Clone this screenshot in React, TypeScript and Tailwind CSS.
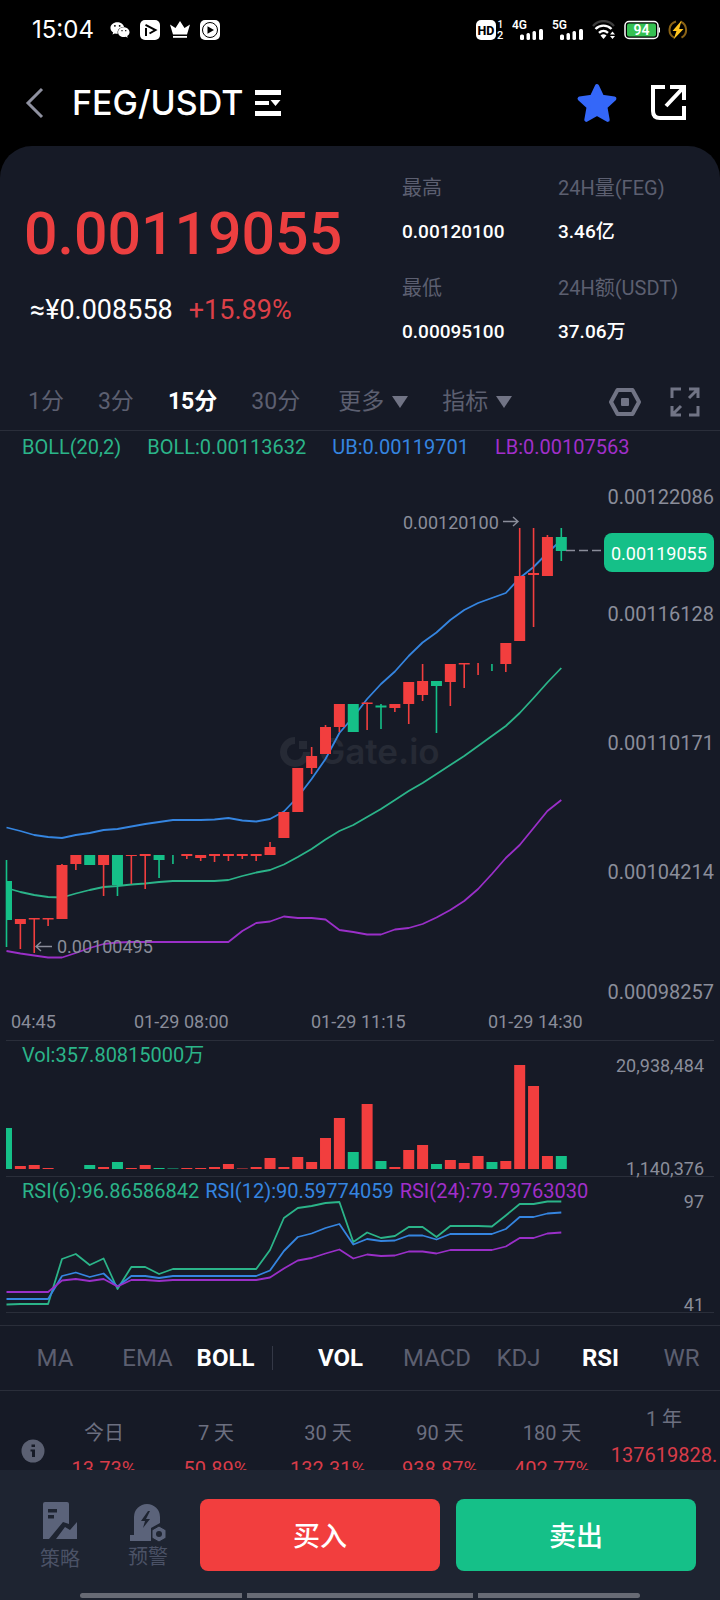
import React from "react";
import { FaWeixin } from "react-icons/fa";

const RED = "#f23e3e";
const GREEN = "#15c088";
const LINE_GREEN = "#2bb489";
const LINE_BLUE = "#3585e0";
const LINE_PURPLE = "#9a2fc8";
const AXIS = "#8a8d9a";
const RULE = "#2a2e3a";

interface Candle {
    up: boolean;
    // open/close body and high/low wick, as chart y values
    body: [number, number] | null;
    wick: [number, number];
    vol: number;
}

const r = (top: number, bottom: number, high: number, low: number, vol: number): Candle => ({
    up: true,
    body: [top, bottom],
    wick: [high, low],
    vol,
});
const g = (top: number, bottom: number, high: number, low: number, vol: number): Candle => ({
    up: false,
    body: [top, bottom],
    wick: [high, low],
    vol,
});

const candles: Candle[] = [
    g(881, 920, 860, 947, 41),
    r(919, 924, 919, 949, 3),
    r(918, 919.5, 918, 953, 4),
    r(918, 919.5, 918, 926, 1),
    r(865, 919, 864, 919, 0),
    r(855, 864, 855, 870, 0),
    g(855, 865, 855, 865, 4),
    r(855, 865, 855, 896, 2),
    g(855, 885, 855, 896, 7),
    r(855, 856, 855, 884, 1),
    r(854, 856, 854, 889, 4),
    g(855, 860, 855, 878, 1),
    { up: false, body: null, wick: [855, 864], vol: 0.5 },
    r(854, 856, 854, 859, 1),
    r(855, 858, 855, 861, 1),
    r(854, 856, 854, 862, 2),
    r(854, 856, 854, 861, 5),
    r(854, 856, 854, 859, 0.5),
    r(854, 856, 854, 861, 2),
    r(847, 855, 842, 855, 11),
    r(812, 838, 812, 838, 2),
    r(768, 812, 768, 812, 12),
    r(756, 768, 747, 774, 7),
    r(727, 754, 725, 754, 31),
    r(704, 727, 704, 732, 51),
    g(704, 732, 704, 732, 17),
    r(702.5, 704, 702.5, 730, 65),
    g(705.5, 707.5, 704, 729, 8),
    r(704, 708, 704, 712, 2),
    r(682, 704, 682, 724, 19),
    r(681, 695, 664, 701, 24),
    g(681, 686, 681, 733, 5),
    r(664, 682, 664, 706, 9),
    r(663, 664.5, 663, 688, 6),
    { up: true, body: null, wick: [663, 675], vol: 13 },
    { up: false, body: null, wick: [664, 671], vol: 7 },
    r(643, 664, 643, 672, 8),
    r(576, 641, 528, 641, 104),
    r(573, 575, 528, 627, 83),
    r(537, 576, 535, 576, 13),
    g(537, 551, 528, 561, 13),
];

const upper = [
    827.5, 831, 835, 837, 838, 835, 833, 830, 829, 826.5, 824, 822, 820, 820, 820, 819.5, 818, 820.5, 821.5, 819,
    811.5, 797, 779, 759, 733, 717, 699, 684, 671.5, 656, 642.5, 632.5, 620, 610, 603, 598, 593, 578, 567, 553, 540,
];
const middle = [
    888, 892, 895, 897, 897.5, 893.5, 890, 887, 886, 884.5, 883.5, 882, 881, 881, 881, 881, 880, 876, 872.5, 870,
    864.5, 857, 849, 839.5, 831, 825, 817, 809, 800, 791, 783, 774, 765, 756, 746, 736, 726, 713, 698, 682.5, 668,
];
const lower = [
    951, 953.5, 955.5, 957.5, 957.5, 953, 948, 944, 942.5, 942, 942, 942, 942, 942, 942, 942, 942, 931, 923, 921.5,
    916.5, 918, 918, 919.5, 930, 932, 934.5, 934.5, 929.5, 928, 924, 917.5, 910, 901, 889, 874, 858, 845, 828, 811, 800,
];

const rsi6 = [
    1304.5, 1304, 1304, 1304, 1259, 1254, 1265, 1258.5, 1289, 1267, 1267, 1274, 1269, 1269, 1269, 1269, 1269, 1269,
    1269, 1250, 1218, 1208, 1206, 1203, 1202, 1242, 1232.5, 1238, 1236, 1227, 1227, 1237, 1226, 1226, 1226, 1226.5,
    1215.5, 1204, 1204, 1201.5, 1201.5,
];
const rsi12 = [
    1299, 1299, 1299, 1299, 1276, 1272.5, 1277, 1273.5, 1286.5, 1276, 1276, 1278, 1276, 1276, 1276, 1276, 1276, 1276,
    1276, 1270.5, 1251, 1237, 1233.5, 1228, 1224, 1244.5, 1239, 1241, 1240.5, 1235.5, 1235.5, 1239.5, 1234, 1234,
    1234, 1234, 1229, 1217, 1217, 1213.5, 1212.5,
];
const rsi24 = [
    1292, 1292, 1292, 1292, 1280.5, 1279, 1281, 1279, 1286.5, 1280, 1280, 1281, 1280, 1280, 1280, 1280, 1280, 1280,
    1280, 1277.5, 1268.5, 1260.5, 1258, 1253.5, 1249.5, 1258.5, 1254.5, 1256, 1255.5, 1251.5, 1251.5, 1253.5, 1250,
    1250, 1250, 1250, 1246.5, 1238, 1238, 1233.5, 1232.5,
];

const cx = (i: number) => 6.5 + i * 13.87;
const toPoints = (ys: number[]) => ys.map((y, i) => `${cx(i).toFixed(1)},${y}`).join(" ");

// the first candle is cut in half by the left edge of the plot
const barBox = (i: number) => (i === 0 ? { x: 6, width: 6 } : { x: cx(i) - 5.5, width: 11 });

const Curve = ({ ys, color }: { ys: number[]; color: string }) => (
    <polyline points={toPoints(ys)} fill="none" stroke={color} strokeWidth="1.8" strokeLinejoin="round" />
);

const SignalBars = ({ label }: { label: string }) => (
    <svg viewBox="0 0 32 22" className="h-[22px] w-8" fill="#fff">
        <text x="0" y="10" fontSize="12" fontWeight="600">{label}</text>
        <rect x="8" y="15.500" width="4" height="5.500" rx="1.500" />
        <rect x="14.500" y="14" width="3.500" height="7" rx="1.500" />
        <rect x="20.500" y="12" width="3.500" height="9" rx="1.500" />
        <rect x="27" y="10" width="4" height="11" rx="1.500" />
    </svg>
);

const StatusBar = () => (
    <div className="flex h-[60px] items-center pl-8 pr-8 text-white">
        <span className="font-['Inter',sans-serif] text-2xl">15:04</span>
        <div className="ml-4 flex items-center gap-[10px]">
            <FaWeixin size={20} />
            <svg viewBox="0 0 20 20" className="size-5">
                <rect width="20" height="20" rx="5" fill="#fff" />
                <path d="M6 8v8M5.500 4.800 15.500 10 9.500 13.500" fill="none" stroke="#000" strokeWidth="2" />
            </svg>
            <svg viewBox="0 0 20 20" className="size-5" fill="#fff">
                <path d="M0 4.500 5.500 8 10 1l4.500 7L20 4.500 17 14.500H3z" />
                <path d="M3 16h14v1.800H3z" />
            </svg>
            <svg viewBox="0 0 20 20" className="size-5">
                <rect width="20" height="20" rx="5" fill="#fff" />
                <circle cx="10" cy="10" r="7.500" fill="none" stroke="#000" strokeWidth="1" />
                <path d="M7.500 6.300 14 10l-6.500 3.700z" fill="#000" />
            </svg>
        </div>
        <div className="ml-auto flex items-center gap-2">
            <svg viewBox="0 0 28 22" className="h-[22px] w-7 overflow-visible">
                <rect y="1" width="20" height="20" rx="5" fill="#fff" />
                <text x="10" y="15.500" fontSize="12.500" fontWeight="800" textAnchor="middle" fill="#000">HD</text>
                <text x="21.500" y="9" fontSize="10" fontWeight="500" fill="#fff">1</text>
                <text x="21" y="20" fontSize="11" fontWeight="500" fill="#fff">2</text>
            </svg>
            <SignalBars label="4G" />
            <SignalBars label="5G" />
            <svg viewBox="0 0 24 20" className="h-5 w-6" fill="none" strokeWidth="2.400">
                <path d="M1 6C7-.5 16-.5 22 6" stroke="#3c3c3c" />
                <path d="M3.500 9c4.500-4.500 11.500-4.500 16 0" stroke="#fff" />
                <path d="M7 12.800c2.700-2.600 6.300-2.600 9 0" stroke="#fff" />
                <path d="M8.500 15.500q3-2.500 6 0l-3 3.500z" fill="#fff" />
                <path d="m18 14.500 2.500-3 2.500 3zM18 16l2.500 3 2.500-3z" fill="#fff" />
            </svg>
            <svg viewBox="0 0 36 20" className="h-5 w-9">
                <rect x="1" y="1.500" width="33" height="17" rx="4" fill="#000" stroke="#fff" strokeWidth="1.500" />
                <rect x="3" y="3.500" width="29" height="13" rx="2" fill="#35c052" />
                <path d="M35.500 7.500v5" stroke="#fff" strokeWidth="1.200" />
                <text x="17.500" y="15" fontSize="14" fontWeight="600" textAnchor="middle" fill="#fff">94</text>
            </svg>
            <svg viewBox="0 0 20 20" className="size-5">
                <path d="M8 1.500a8.700 8.700 0 0 0-2 16M12.500 1.800a8.700 8.700 0 0 1 1 15.800" fill="none" stroke="#8a6215" strokeWidth="2" />
                <path d="M13.500.5 4.500 11h4l-3 8.500L15.500 9h-4.300z" fill="#ffc51f" />
            </svg>
        </div>
    </div>
);

const Header = () => (
    <header className="flex h-[86px] items-center pl-6 pr-8">
        <button aria-label="返回">
            <svg viewBox="0 0 20 32" className="h-8 w-5">
                <path d="M18 2 4 16l14 14" fill="none" stroke="#8f91a0" strokeWidth="3" />
            </svg>
        </button>
        <h1 className="ml-7 font-['Inter',sans-serif] text-[34px] font-medium leading-10 text-white">FEG/USDT</h1>
        <button aria-label="切换交易对" className="ml-3">
            <svg viewBox="0 0 26 28" className="h-7 w-[26px]" fill="#fff">
                <path d="M0 1h26v5H0zM0 12h14v4H0zM0 22h26v5H0zM15.500 11h10L20.500 17z" />
            </svg>
        </button>
        <button aria-label="收藏" className="ml-auto">
            <svg viewBox="0 0 40 38" className="h-10 w-[42px]">
                <path
                    d="m20 3 4.800 10.200 11.700 1.600-8.600 8 2.200 12.200L20 29.200 9.900 35l2.200-12.200-8.600-8 11.700-1.600z"
                    fill="#3467f9"
                    stroke="#3467f9"
                    strokeWidth="4"
                    strokeLinejoin="round"
                />
            </svg>
        </button>
        <button aria-label="分享" className="ml-8">
            <svg viewBox="0 0 38 38" className="size-[38px]" fill="none" stroke="#fff" strokeWidth="4">
                <path d="M15 3H3v24q0 7 7 7h24V22" />
                <path d="M20 3h14v13M33 4 16 22" />
            </svg>
        </button>
    </header>
);

const stats = [
    { label: "最高", value: "0.00120100" },
    { label: "24H量(FEG)", value: "3.46亿" },
    { label: "最低", value: "0.00095100" },
    { label: "24H额(USDT)", value: "37.06万" },
];

const Ticker = () => (
    <section className="flex pb-7 pl-6 pt-7">
        <div className="flex-1 pt-7">
            <div className="text-[59px] font-medium leading-[64px] text-[#ec3f40]">0.00119055</div>
            <div className="mt-7 flex gap-4 pl-[6px] text-[27px] leading-8">
                <span className="text-white">≈¥0.008558</span>
                <span className="text-[#dc4048]">+15.89%</span>
            </div>
        </div>
        <dl className="grid w-[318px] grid-cols-[156px_1fr] gap-y-7 leading-7">
            {stats.map((s) => (
                <div key={s.label} className="flex flex-col gap-4">
                    <dt className="text-xl leading-7 text-[#5c5f70]">{s.label}</dt>
                    <dd className="text-[19px] font-medium text-white">{s.value}</dd>
                </div>
            ))}
        </dl>
    </section>
);

const Caret = () => (
    <svg viewBox="0 0 16 12" className="h-3 w-4" fill="#717485">
        <path d="M0 0h16L8 12z" />
    </svg>
);

const intervals = ["1分", "3分", "15分", "30分"];

const IntervalTabs = () => (
    <nav className="flex h-[57px] items-center border-b border-[#2a2e3a] pl-7 pr-5 text-[23px] text-[#5c5f70]">
        <div className="flex items-center gap-[34px]">
            {intervals.map((name) => (
                <button key={name} className={name === "15分" ? "font-bold text-white" : ""}>{name}</button>
            ))}
            <button className="ml-1 flex items-center gap-2">更多<Caret /></button>
            <button className="flex items-center gap-2">指标<Caret /></button>
        </div>
        <div className="ml-auto flex items-center gap-7">
            <button aria-label="设置">
                <svg viewBox="0 0 34 30" className="h-[30px] w-[34px]">
                    <path d="M9.500 3h15L31 15l-6.500 12h-15L3 15z" fill="none" stroke="#717485" strokeWidth="4" strokeLinejoin="round" />
                    <rect x="13" y="11" width="8" height="8" rx="1" fill="#717485" />
                </svg>
            </button>
            <button aria-label="全屏">
                <svg viewBox="0 0 30 30" className="size-[30px]" fill="none" stroke="#717485" strokeWidth="3">
                    <path d="M2 11V2h9M28 19v9h-9M19 2h9v9M27 3l-8 8M11 28H2v-9M3 27l8-8" />
                </svg>
            </button>
        </div>
    </nav>
);

const PriceChart = () => (
    <section>
        <div className="flex gap-[26px] pl-[22px] text-xl leading-8">
            <span className="text-[#2bb489]">BOLL(20,2)</span>
            <span className="text-[#2bb489]">BOLL:0.00113632</span>
            <span className="text-[#3585e0]">UB:0.00119701</span>
            <span className="text-[#a12fca]">LB:0.00107563</span>
        </div>
        <svg viewBox="0 463 720 577" className="block w-full" fontSize="18">
            {/* watermark */}
            <g fill="#262a35">
                <path d="M295 737a15 15 0 1 0 15 15h-7a8 8 0 1 1-8-8z" />
                <rect x="299" y="741" width="8" height="8" />
                <text x="319" y="764" fontSize="35" fontWeight="600" fontFamily="Inter, sans-serif">Gate.io</text>
            </g>

            <Curve ys={upper} color={LINE_BLUE} />
            <Curve ys={middle} color={LINE_GREEN} />
            <Curve ys={lower} color={LINE_PURPLE} />

            {candles.map((c, i) => (
                <g key={i} fill={c.up ? RED : GREEN}>
                    <rect x={cx(i) - 0.8} y={c.wick[0]} width="1.600" height={c.wick[1] - c.wick[0]} />
                    {c.body && <rect {...barBox(i)} y={c.body[0]} height={c.body[1] - c.body[0]} />}
                </g>
            ))}

            <g fill={AXIS}>
                <text x="403" y="529">0.00120100</text>
                <text x="57" y="953">0.00100495</text>
            </g>
            <g fill="none" stroke={AXIS} strokeWidth="1.400">
                <path d="M503 521.500h15M513 517l5 4.500-5 4.500" />
                <path d="M52 946.500H36M41 942l-5 4.500 5 4.500" />
                <path d="M566 550.500h38" strokeDasharray="9 4" />
            </g>

            <g fill={AXIS} fontSize="20" textAnchor="end">
                <text x="714" y="504">0.00122086</text>
                <text x="714" y="621">0.00116128</text>
                <text x="714" y="750">0.00110171</text>
                <text x="714" y="879">0.00104214</text>
                <text x="714" y="999">0.00098257</text>
            </g>
            <rect x="604" y="533" width="110" height="39" rx="8" fill={GREEN} />
            <text x="611" y="560" fill="#fff">0.00119055</text>

            <g fill={AXIS}>
                <text x="11" y="1028">04:45</text>
                <text x="134" y="1028">01-29 08:00</text>
                <text x="311" y="1028">01-29 11:15</text>
                <text x="488" y="1028">01-29 14:30</text>
            </g>
        </svg>
    </section>
);

const VolumeChart = () => (
    <section>
        <div className="mx-[6px] border-t border-[#2a2e3a] pl-4 text-xl leading-7 text-[#2bb489]">Vol:357.80815000万</div>
        <svg viewBox="0 1069 720 107" className="block w-full overflow-visible" fontSize="18">
            {candles.map((c, i) => (
                <rect key={i} {...barBox(i)} y={1169 - c.vol} height={c.vol} fill={c.up ? RED : GREEN} />
            ))}
            <g fill={AXIS} textAnchor="end">
                <text x="704" y="1072">20,938,484</text>
                <text x="704" y="1175">1,140,376</text>
            </g>
        </svg>
    </section>
);

const RsiChart = () => (
    <section>
        <div className="mx-[6px] flex gap-[6px] border-t border-[#2a2e3a] pl-4 text-xl leading-7">
            <span className="text-[#2bb489]">RSI(6):96.86586842</span>
            <span className="text-[#3585e0]">RSI(12):90.59774059</span>
            <span className="text-[#a12fca]">RSI(24):79.79763030</span>
        </div>
        <svg viewBox="0 1205 720 108" className="block w-full overflow-visible" fontSize="18">
            <Curve ys={rsi6} color={LINE_GREEN} />
            <Curve ys={rsi12} color={LINE_BLUE} />
            <Curve ys={rsi24} color={LINE_PURPLE} />
            <path d="M6 1312.500h708" stroke={RULE} />
            <g fill={AXIS} textAnchor="end">
                <text x="704" y="1208">97</text>
                <text x="704" y="1311">41</text>
            </g>
        </svg>
    </section>
);

const mainIndicators = ["MA", "EMA", "BOLL"];
const subIndicators = ["VOL", "MACD", "KDJ", "RSI", "WR"];
const activeIndicators = ["BOLL", "VOL", "RSI"];

const IndicatorButton = ({ name }: { name: string }) => (
    <button className={activeIndicators.includes(name) ? "font-bold text-white" : "text-[#5c5f70]"}>{name}</button>
);

const IndicatorTabs = () => (
    <nav className="mt-3 grid h-[66px] grid-cols-[94fr_91fr_65fr_28fr_109fr_84fr_79fr_85fr_77fr] items-center border-y border-[#2a2e3a] pl-2 text-2xl">
        {mainIndicators.map((name) => <IndicatorButton key={name} name={name} />)}
        <div className="mx-auto h-6 w-px bg-[#343846]" />
        {subIndicators.map((name) => <IndicatorButton key={name} name={name} />)}
    </nav>
);

const performance = [
    { label: "今日", value: "13.73%" },
    { label: "7 天", value: "50.89%" },
    { label: "30 天", value: "132.31%" },
    { label: "90 天", value: "938.87%" },
    { label: "180 天", value: "402.77%" },
    { label: "1 年", value: "137619828.", tall: true },
];

const Performance = () => (
    <section className="flex items-center pt-[14px] text-xl">
        <div className="w-12 pl-[21px]">
            <svg viewBox="0 0 24 24" className="size-6">
                <circle cx="12" cy="12" r="11.500" fill="#5b6072" />
                <path d="M10.500 5.500h3.500V8h-3.500zM9.500 10.500H14V18h-3v-5.500H9.500z" fill="#161a26" />
            </svg>
        </div>
        {performance.map((p) => (
            <div key={p.label} className="flex flex-1 flex-col items-center gap-2 leading-7">
                <span className="text-[#6c6f80]">{p.label}</span>
                <span className={p.tall ? "h-14 text-[#d83c49]" : "text-[#d83c49]"}>{p.value}</span>
            </div>
        ))}
    </section>
);

const BottomBar = () => (
    <footer className="bg-[#1e2431]">
        <div className="flex items-center pb-5 pl-4 pr-6 pt-[27px]">
            <button className="flex w-[88px] flex-col items-center gap-[6px] pt-1 text-xl leading-7 text-[#4b5266]">
                <svg viewBox="0 0 36 38" className="h-[38px] w-9" fill="#5b637a">
                    <path d="M1 3q0-2 2-2h22q2 0 2 2v20l-6-2L7 38H1z" />
                    <path d="M14 38 23 26l5 3 7-8v17z" />
                    <path d="M6 8h9v3.500H6zM6 14h6v3.500H6z" fill="#1e2431" />
                </svg>
                策略
            </button>
            <button className="flex w-[88px] flex-col items-center pt-1 text-xl leading-7 text-[#4b5266]">
                <svg viewBox="0 0 38 40" className="h-10 w-[38px]" fill="#5b637a">
                    <path d="M5 32V14a13 13 0 0 1 26 0v6l-9 5v13H1v-6z" />
                    <path d="m19 8-7 10h4l-2 7 7-9h-4l4-8z" fill="#1e2431" />
                    <path d="m30 23 7 4v8l-7 4-7-4v-8z" stroke="#1e2431" strokeWidth="1" />
                    <circle cx="30" cy="31" r="3" fill="#1e2431" />
                </svg>
                预警
            </button>
            <div className="ml-2 flex flex-1 gap-4 text-[27px] font-medium text-white">
                <button className="h-[72px] flex-1 rounded-lg bg-[#f23e3e] pt-1">买入</button>
                <button className="h-[72px] flex-1 rounded-lg bg-[#15c088] pt-1">卖出</button>
            </div>
        </div>
        <div className="mx-20 flex gap-[5px] pb-[2px]">
            <div className="h-[5px] flex-[162] rounded-l-full bg-[#686b75]" />
            <div className="h-[5px] flex-[226] bg-[#686b75]" />
            <div className="h-[5px] flex-[162] rounded-r-full bg-[#686b75]" />
        </div>
    </footer>
);

export default function App() {
    return (
        <div className="flex h-screen flex-col bg-black font-['Roboto','Noto_Sans_CJK_SC',sans-serif]">
            <StatusBar />
            <Header />
            <main className="min-h-0 flex-1 overflow-y-auto rounded-t-[32px] bg-[#161a26] [scrollbar-width:none]">
                <Ticker />
                <IntervalTabs />
                <PriceChart />
                <VolumeChart />
                <RsiChart />
                <IndicatorTabs />
                <Performance />
            </main>
            <BottomBar />
        </div>
    );
}
